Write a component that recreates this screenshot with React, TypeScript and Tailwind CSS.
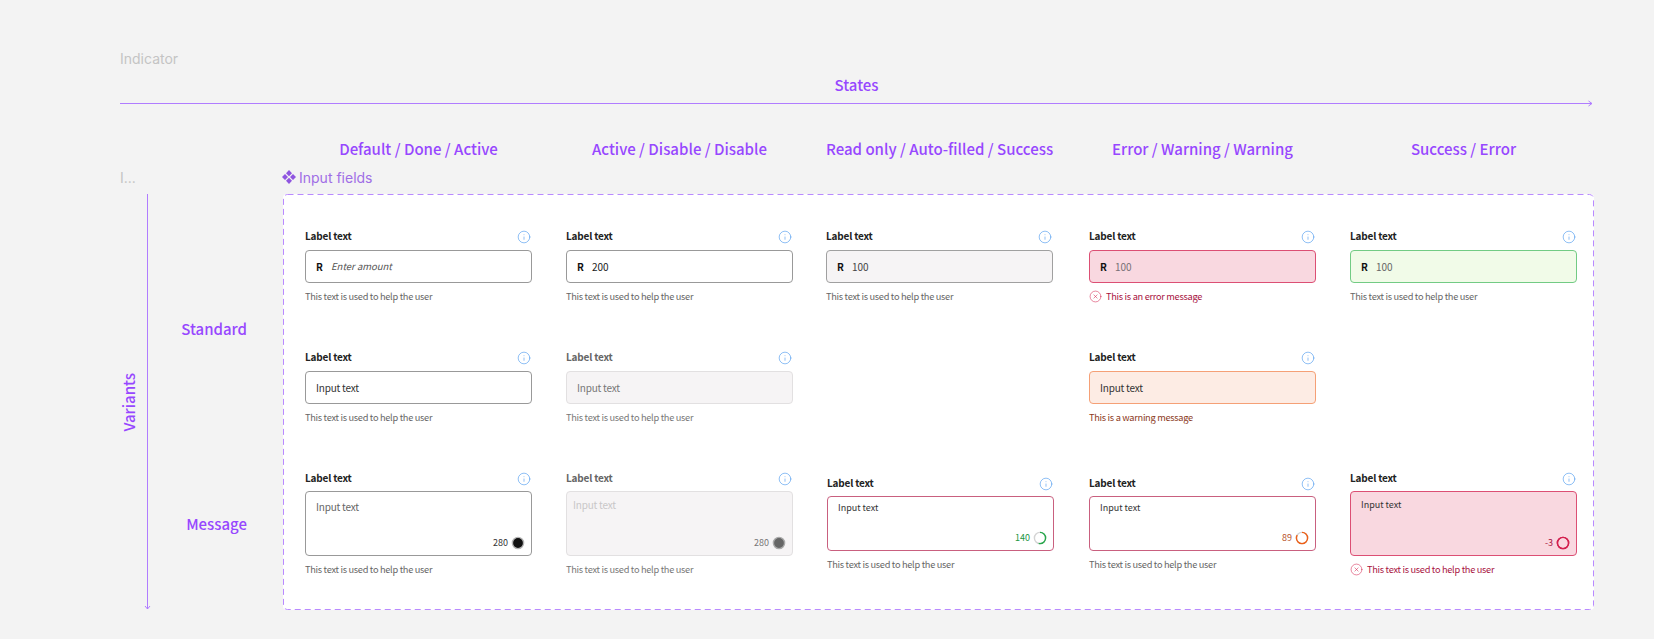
import { CircleX, Info } from 'lucide-react';
import type { ReactNode } from 'react';

const HELP = 'This text is used to help the user';

function Label({ muted }: { muted?: boolean }) {
  return (
    <div className="flex items-center justify-between h-4 pr-px mb-[6px]">
      <span className={`text-[10px] tracking-[-0.2px] leading-4 font-semibold ${muted ? 'text-[#666666]' : 'text-[#222222]'}`}>Label text</span>
      <Info size={14} strokeWidth={1} className="text-[#3f93ee] mt-[2px]" />
    </div>
  );
}

function Help({ text = HELP, color = 'text-[#666666]', error }: { text?: string; color?: string; error?: boolean }) {
  return (
    <div className={`flex items-center gap-[4px] mt-[5px] h-4 text-[9.25px] tracking-[-0.3px] leading-4 ${color}`}>
      {error && <CircleX size={13} strokeWidth={1} className="text-[#d4214f]" />}
      <span>{text}</span>
    </div>
  );
}

function Amount({ box, value, valueClass }: { box: string; value: string; valueClass: string }) {
  return (
    <div className={`flex items-center h-[33px] rounded-[4px] border pl-[10px] text-[10px] ${box}`}>
      <span className="w-[15px] font-semibold text-[#111111]">R</span>
      <span className={valueClass}>{value}</span>
    </div>
  );
}

function Plain({ box, textClass }: { box: string; textClass: string }) {
  return (
    <div className={`flex items-center h-[33px] rounded-[4px] border pl-[10px] text-[10px] tracking-[-0.2px] ${box}`}>
      <span className={textClass}>Input text</span>
    </div>
  );
}

function Ring({ track, stroke, pct, fill }: { track: string; stroke: string; pct: number; fill?: string }) {
  return (
    <svg width="14" height="14" viewBox="0 0 14 14" className="shrink-0">
      <circle cx="7" cy="7" r="5.6" fill={fill ?? 'none'} stroke={track} strokeWidth="1.4" />
      {pct > 0 && (
        <circle
          cx="7"
          cy="7"
          r="5.6"
          fill="none"
          stroke={stroke}
          strokeWidth="1.4"
          pathLength={100}
          strokeDasharray={`${pct} 100`}
          transform="rotate(-90 7 7)"
        />
      )}
    </svg>
  );
}

function Message({
  box,
  text,
  count,
  countClass,
  height,
  ring,
}: {
  box: string;
  text: string;
  count: string;
  countClass: string;
  height: string;
  ring: ReactNode;
}) {
  return (
    <div className={`flex flex-col justify-between rounded-[4px] border mb-px ${height} ${box}`}>
      <div className={text}>Input text</div>
      <div className="flex items-center justify-end gap-[3px] pr-[6px] pb-[4px]">
        <span className={`text-[9px] leading-4 ${countClass}`}>{count}</span>
        {ring}
      </div>
    </div>
  );
}

function Frame({ children }: { children: ReactNode }) {
  return (
    <div className="relative w-[1311px] h-[416px] bg-white rounded-[4px] pl-[22px] pt-[34px]">
      <svg className="absolute inset-0 w-full h-full pointer-events-none">
        <rect x="0.5" y="0.5" width="1310" height="415" rx="4" fill="none" stroke="#b98aff" strokeDasharray="6 4" />
      </svg>
      {children}
    </div>
  );
}

export default function App() {
  const titles = [
    'Default / Done / Active',
    'Active / Disable / Disable',
    'Read only / Auto-filled / Success',
    'Error / Warning / Warning',
    'Success / Error',
  ];
  const cols = 'grid grid-cols-[261px_260px_263px_261px_227px]';
  const cell = 'w-[227px]';

  return (
    <div className="w-full h-[639px] overflow-hidden bg-[#f3f3f3] pl-[120px] pt-[50px] font-['Noto_Sans_CJK_SC',sans-serif]">
      <div className="h-[17px] text-[14px] leading-[17px] text-[#c4c4c4] font-['Inter',sans-serif]">Indicator</div>

      <div className="w-[1473px] mt-[8px] text-center text-[15px] leading-5 font-medium text-[#9747ff]">States</div>
      <svg width="1473" height="7" className="block mt-[5px]">
        <path d="M0 3.5H1472M1468.5 1L1472 3.5L1468.5 6" fill="none" stroke="#b07cff" />
      </svg>

      <div className={`${cols} ml-[185px] mt-[32px] text-[15px] leading-5 font-medium text-[#9747ff] text-center`}>
        {titles.map((t) => (
          <div key={t} className="w-[227px] whitespace-nowrap">{t}</div>
        ))}
      </div>

      <div className="flex items-center h-[18px] mt-[9px] font-['Inter',sans-serif] text-[14px]">
        <span className="w-[163px] text-[#c4c4c4]">I...</span>
        <svg width="14" height="14" viewBox="0 0 14 14" className="mr-[3px] -ml-px">
          <path d="M7 0 10 3.2 7 6.2 4 3.2ZM7 7.8 10 10.8 7 14 4 10.8ZM3 4 6 7 3 10 0 7ZM11 4 14 7 11 10 8 7Z" fill="#8f55e0" />
        </svg>
        <span className="text-[#9f6ee6]">Input fields</span>
      </div>

      <div className="flex mt-[8px] h-[416px]">
        <div className="w-[18px] flex items-center justify-center">
          <span className="[writing-mode:vertical-rl] rotate-180 text-[15px] font-medium leading-5 text-[#9747ff]">Variants</span>
        </div>
        <svg width="7" height="416" className="ml-[6px] shrink-0">
          <path d="M3.5 0V415M1 412 3.5 415 6 412" fill="none" stroke="#b07cff" />
        </svg>
        <div className="w-[96px] pt-[125px] text-right text-[15px] leading-5 font-medium text-[#9747ff]">
          <div>Standard</div>
          <div className="mt-[175px]">Message</div>
        </div>
        <div className="ml-[36px]">
          <Frame>
            <div className={`${cols} grid-rows-[121px_121px_auto]`}>
              <div className={cell}>
                <Label />
                <Amount box="bg-white border-[#999999]" value="Enter amount" valueClass="italic text-[#555555] text-[9.5px]" />
                <Help />
              </div>
              <div className={cell}>
                <Label />
                <Amount box="bg-white border-[#999999]" value="200" valueClass="text-[#222222]" />
                <Help />
              </div>
              <div className={cell}>
                <Label />
                <Amount box="bg-[#f6f4f5] border-[#a0a0a0]" value="100" valueClass="text-[#444444]" />
                <Help />
              </div>
              <div className={cell}>
                <Label />
                <Amount box="bg-[#f9d8e0] border-[#dc4f74]" value="100" valueClass="text-[#777076]" />
                <Help text="This is an error message" color="text-[#a8123f]" error />
              </div>
              <div className={cell}>
                <Label />
                <Amount box="bg-[#f1fbe8] border-[#72cb84]" value="100" valueClass="text-[#666666]" />
                <Help />
              </div>

              <div className={cell}>
                <Label />
                <Plain box="bg-white border-[#999999]" textClass="text-[#333333]" />
                <Help />
              </div>
              <div className={cell}>
                <Label muted />
                <Plain box="bg-[#f6f4f5] border-[#e2e0e1]" textClass="text-[#777777]" />
                <Help color="text-[#777777]" />
              </div>
              <div />
              <div className={cell}>
                <Label />
                <Plain box="bg-[#fdece4] border-[#f5a076]" textClass="text-[#333333]" />
                <Help text="This is a warning message" color="text-[#8c3a1c]" />
              </div>
              <div />

              <div className={cell}>
                <Label />
                <Message
                  box="bg-white border-[#999999]"
                  height="h-[65px] -mt-px"
                  text="pl-[10px] pt-[5px] text-[10px] tracking-[-0.2px] leading-5 text-[#666666]"
                  count="280"
                  countClass="text-[#333333]"
                  ring={<Ring track="#b5b5b5" stroke="#111111" pct={0} fill="#111111" />}
                />
                <Help />
              </div>
              <div className={cell}>
                <Label muted />
                <Message
                  box="bg-[#f6f4f5] border-[#e2e0e1]"
                  height="h-[65px] -mt-px"
                  text="pl-[6px] pt-[3px] text-[10px] tracking-[-0.2px] leading-5 text-[#c9c7c8]"
                  count="280"
                  countClass="text-[#777777]"
                  ring={<Ring track="#aaaaaa" stroke="#666666" pct={0} fill="#666666" />}
                />
                <Help color="text-[#777777]" />
              </div>
              <div className={`${cell} mt-[5px] ml-px`}>
                <Label />
                <Message
                  box="bg-white border-[#c9607f]"
                  height="h-[55px] -mt-px"
                  text="pl-[10px] pt-[3px] text-[9px] leading-4 text-[#333333]"
                  count="140"
                  countClass="text-[#22963f]"
                  ring={<Ring track="#d4d4d4" stroke="#25a84a" pct={54} />}
                />
                <Help />
              </div>
              <div className={`${cell} mt-[5px]`}>
                <Label />
                <Message
                  box="bg-white border-[#c9607f]"
                  height="h-[55px] -mt-px"
                  text="pl-[10px] pt-[3px] text-[9px] leading-4 text-[#333333]"
                  count="89"
                  countClass="text-[#b8532a]"
                  ring={<Ring track="#d4d4d4" stroke="#ee5f16" pct={84} />}
                />
                <Help />
              </div>
              <div className={cell}>
                <Label />
                <Message
                  box="bg-[#f9d8e0] border-[#dc4f74]"
                  height="h-[65px] -mt-px"
                  text="pl-[10px] pt-[5px] text-[9px] leading-4 text-[#333333]"
                  count="-3"
                  countClass="text-[#a8123f]"
                  ring={<Ring track="#d4214f" stroke="#d4214f" pct={100} />}
                />
                <Help color="text-[#a8123f]" error />
              </div>
            </div>
          </Frame>
        </div>
      </div>
    </div>
  );
}
